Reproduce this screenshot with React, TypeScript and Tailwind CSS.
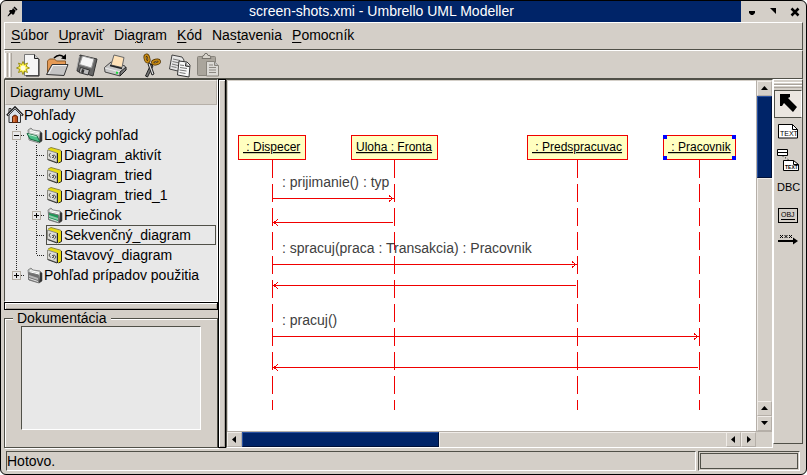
import type { ReactNode } from "react";

const participants = [
  { label: " : Dispecer", x: 238, width: 67, line: 272, selected: false },
  { label: "Uloha : Fronta", x: 351, width: 86, line: 394, selected: false },
  { label: " : Predspracuvac", x: 527, width: 100, line: 577, selected: false },
  { label: " : Pracovnik", x: 663, width: 72, line: 699, selected: true },
];

const messages = [
  { label: ": prijimanie() : typ", to: 394, y: 198, reply: 222 },
  { label: ": spracuj(praca : Transakcia) : Pracovnik", to: 577, y: 264, reply: 285 },
  { label: ": pracuj()", to: 699, y: 336, reply: 367 },
];

function SequenceDiagram() {
  return (
    <svg viewBox="228 81 528 350" className="block h-[350px] w-[528px] max-w-none" fontFamily="'Liberation Sans', Arial, sans-serif">
      <g shapeRendering="crispEdges" stroke="#f00000" fill="none">
        {participants.map((p) => (
          <g key={p.label}>
            <path d={`M${p.line + 0.5} 160V410`} strokeDasharray="18 6" />
            <rect x={p.x + 0.5} y="135.5" width={p.width} height="24" fill="#ffffc0" />
          </g>
        ))}
        {messages.map((m) => (
          <g key={m.label}>
            <path d={`M272 ${m.y + 0.5}H${m.to - 1}M${m.to - 5} ${m.y - 2.5}l4 3l-4 3`} />
            <path d={`M273 ${m.reply + 0.5}H${m.to - 1}M278 ${m.reply - 2.5}l-4 3l4 3`} />
          </g>
        ))}
      </g>
      {participants.map((p) => (
        <text key={p.label} x={p.x + 5} y="151" className="whitespace-pre text-[12px] underline" fill="#000">
          {p.label}
        </text>
      ))}
      {messages.map((m) => (
        <text key={m.label} x="282" y={m.y - 11} className="text-[14px]" fill="#404040">
          {m.label}
        </text>
      ))}
      {participants
        .filter((p) => p.selected)
        .map((p) => (
          <path
            key={p.label}
            fill="#00f"
            shapeRendering="crispEdges"
            d={`M${p.x} 135h4v4h-4zM${p.x + p.width - 3} 135h4v4h-4zM${p.x} 156h4v4h-4zM${p.x + p.width - 3} 156h4v4h-4z`}
          />
        ))}
    </svg>
  );
}

function HomeIcon() {
  return (
    <svg viewBox="0 0 18 18" className="h-[18px] w-[18px] shrink-0">
      <path d="M3 8.500V16.500H14.500V8.500L9 3z" fill="#d9e0e8" stroke="#333" />
      <path d="M3 2.500h2v4l-2 2z" fill="#eee" stroke="#333" />
      <path d="M1 9.500L9 1.500l8 8" fill="none" stroke="#222" strokeWidth="2.400" />
      <path d="M2 9L9 2.200l7 6.800" fill="none" stroke="#c8ccd0" strokeWidth="0.900" />
      <path d="M6.500 16.500V10.500q2.500-3 5 0v6z" fill="#b84a18" stroke="#5a2208" />
      <path d="M8 11v5" stroke="#f0a060" />
    </svg>
  );
}

function FolderIcon({ tone, open }: { tone: string; open?: boolean }) {
  return (
    <svg viewBox="0 0 18 18" className="h-[18px] w-[18px] shrink-0">
      <path d="M2 4l3-2 2 2 7 1 2 2v8l-3 2L3 14z" fill="#c4c8c4" stroke="#8a8a8a" />
      <path d="M14 6l2 1v8l-3 2z" fill="#333" />
      <path d="M4 4.500l9 2M4 6l9 2" stroke="#fff" />
      {open ? (
        <>
          <path d="M1 7.500l10 2.500 3 6L4 13z" fill={tone} stroke="#17683f" />
          <path d="M2.500 8.500l8 2" stroke="#c8f0d8" />
        </>
      ) : (
        <>
          <path d="M2.500 6.500l10 2.500v7.500l-10-3z" fill={tone} stroke="#777" />
          <path d="M3 9l9 3v2L3 11z" fill="#fff" opacity="0.500" />
          <path d="M3 12.500l9 3" stroke="#e8e8e8" />
        </>
      )}
    </svg>
  );
}

function DiagramIcon() {
  return (
    <svg viewBox="0 0 18 18" className="h-[18px] w-[18px] shrink-0">
      <path d="M2 3.500l3-2 9 3 1.500 1v10l-3 1.500z" fill="#e8dc10" />
      <path d="M2 3l3-1.500 9 2.500 1.500 1" fill="none" stroke="#777020" strokeWidth="0.800" />
      <path d="M1.500 4l9.500 3v9.500L1.500 13z" fill="#dcdcd8" stroke="#8c8c84" />
      <path d="M11.500 7v10M15.500 5v10.500l-3 1.500" fill="none" stroke="#222" />
      <path d="M1.500 13.500L11 17" stroke="#333" />
      <path d="M4.500 7L3 9l1.500 2.500M8 8.500l2 2.500-2 2.500M6 9.500h1.500v2H6" fill="none" stroke="#444" strokeWidth="0.900" />
    </svg>
  );
}

type GuideKind = "line" | "tee" | "end" | "minus" | "plus" | "plusEnd";

function Guide({ kind }: { kind: GuideKind }) {
  const boxed = kind === "minus" || kind === "plus" || kind === "plusEnd";
  const last = kind === "end" || kind === "plusEnd";
  const drawing = (
    <svg viewBox="0 0 20 20" className="block h-5 w-5" shapeRendering="crispEdges" fill="none">
      <path d={last ? "M10.500 0V10" : "M10.500 0V20"} stroke="#222" strokeDasharray="1 1" />
      {kind !== "line" && <path d="M11 10.500H18" stroke="#222" strokeDasharray="1 1" />}
      {boxed && (
        <>
          <rect x="6.500" y="6.500" width="8" height="8" fill="#e8e8e8" stroke="#b5aea4" />
          <path d={kind === "minus" ? "M8 10.500h5" : "M8 10.500h5M10.500 8v5"} stroke="#000" />
        </>
      )}
    </svg>
  );
  return boxed ? (
    <button type="button" aria-label={kind === "minus" ? "Zbaliť" : "Rozbaliť"} className="shrink-0">
      {drawing}
    </button>
  ) : (
    <span className="shrink-0">{drawing}</span>
  );
}

const tree: { label: string; guides: GuideKind[]; icon: ReactNode; selected?: boolean }[] = [
  { label: "Pohľady", guides: [], icon: <HomeIcon /> },
  { label: "Logický pohľad", guides: ["minus"], icon: <FolderIcon tone="#4cc088" open /> },
  { label: "Diagram_aktivít", guides: ["line", "tee"], icon: <DiagramIcon /> },
  { label: "Diagram_tried", guides: ["line", "tee"], icon: <DiagramIcon /> },
  { label: "Diagram_tried_1", guides: ["line", "tee"], icon: <DiagramIcon /> },
  { label: "Priečinok", guides: ["line", "plus"], icon: <FolderIcon tone="#209858" /> },
  { label: "Sekvenčný_diagram", guides: ["line", "tee"], icon: <DiagramIcon />, selected: true },
  { label: "Stavový_diagram", guides: ["line", "end"], icon: <DiagramIcon /> },
  { label: "Pohľad prípadov použitia", guides: ["plusEnd"], icon: <FolderIcon tone="#707070" /> },
];

const menus = [
  ["", "S", "úbor"],
  ["", "U", "praviť"],
  ["Dia", "g", "ram"],
  ["", "K", "ód"],
  ["Nas", "t", "avenia"],
  ["", "P", "omocník"],
];

const fileTools: { name: string; drawing: ReactNode }[] = [
  {
    name: "Nový",
    drawing: (
      <>
        <path d="M9.500 2.500h10l4 4v17h-14z" fill="#f6f6f6" stroke="#777" />
        <path d="M24 7v17H11" fill="none" stroke="#222" />
        <path d="M19.500 2.500v4h4" fill="#ccc" stroke="#222" />
        <path d="M8 9.500l1.300 3L12.500 11l-1.300 3.300 3.300 1.700-3.300 1.300 1.300 3.200-3.200-1.300L8 22.500l-1.300-3.300-3.200 1.300 1.300-3.200L1.500 16l3.300-1.700L3.500 11l3.200 1.500z" fill="#fff34a" stroke="#8b8000" strokeWidth="0.800" />
        <circle cx="8" cy="16" r="2.500" fill="#fffde0" />
      </>
    ),
  },
  {
    name: "Otvoriť",
    drawing: (
      <>
        <path d="M3.500 22.500V9l2-2h5l2 2h9v4" fill="#e59a55" stroke="#8a5a2a" />
        <path d="M2.500 22.500L8 12.500h16l-4 11z" fill="#c4c4c4" stroke="#333" />
        <path d="M4.500 22L9 13.500h14" fill="none" stroke="#f2f2f2" />
        <path d="M10 6q5-5 10-1" fill="none" stroke="#000" strokeWidth="1.600" />
        <path d="M17 6.500l5 1V2z" fill="#000" />
      </>
    ),
  },
  {
    name: "Uložiť",
    drawing: (
      <>
        <path d="M7 3l17 4-4 17-16-5z" fill="#666" stroke="#333" />
        <path d="M9.500 4l11.500 3-2.500 9-12-3.500z" fill="#f5f5f5" stroke="#999" />
        <path d="M7.500 15.500l9 2.500-1.500 5-9-2.500z" fill="#bbb" stroke="#333" />
        <path d="M9 17l2.500.700-1 3.500L8 20.500z" fill="#333" />
        <path d="M6.500 4L3.500 18" stroke="#aaa" />
      </>
    ),
  },
  {
    name: "Tlačiť",
    drawing: (
      <>
        <path d="M2.500 15.500L9 10l14 4 1 4-6 6L3 20z" fill="#c8c8c8" stroke="#444" />
        <path d="M3 16l15 4 6-5" fill="none" stroke="#eee" />
        <path d="M9 13l3-10 10 2.500-2 10z" fill="#ffe2b8" stroke="#666" />
        <path d="M8 13.500l12 3" stroke="#222" strokeWidth="1.500" />
        <path d="M18 20v4l6-6v-3z" fill="#777" stroke="#222" />
        <path d="M14 20.500l2 .500" stroke="#18d838" strokeWidth="2" />
      </>
    ),
  },
  {
    name: "Vystrihnúť",
    drawing: (
      <>
        <path d="M14 12l2 2-5.500 11-2-1z" fill="#777" stroke="#222" />
        <path d="M11 12l2-1 4 11-2 1z" fill="#ddd" stroke="#222" />
        <ellipse cx="10" cy="6.500" rx="1.800" ry="3.500" fill="none" stroke="#4d3000" strokeWidth="3" transform="rotate(-15 10 6.500)" />
        <ellipse cx="10" cy="6.500" rx="1.800" ry="3.500" fill="none" stroke="#c98c14" strokeWidth="1.600" transform="rotate(-15 10 6.500)" />
        <ellipse cx="19" cy="10" rx="3.500" ry="1.800" fill="none" stroke="#4d3000" strokeWidth="3" transform="rotate(-15 19 10)" />
        <ellipse cx="19" cy="10" rx="3.500" ry="1.800" fill="none" stroke="#c98c14" strokeWidth="1.600" transform="rotate(-15 19 10)" />
      </>
    ),
  },
  {
    name: "Kopírovať",
    drawing: (
      <>
        <path d="M6 3l10 2 2 3-2 12L3.500 17z" fill="#e6e6e6" stroke="#444" />
        <path d="M7 7l7 1.500M6.500 9.500l7 1.500M6 12l6 1.500M5.500 14.500l5 1" stroke="#777" />
        <path d="M13 9l8 1 3 3-1 12-11.500-2z" fill="#f8f8f8" stroke="#333" />
        <path d="M20 10.500l-.500 3.500 4 .500" fill="#bbb" stroke="#222" />
        <path d="M14 13l4 .500M14 15.500l7 1M13.500 18l7 1M13.500 20.500l6 1" stroke="#777" />
      </>
    ),
  },
  {
    name: "Prilepiť",
    drawing: (
      <>
        <rect x="2.500" y="4.500" width="18" height="19" rx="1" fill="#aaa59c" stroke="#88847c" />
        <path d="M7 6.500h9l-1-3h-2l-1-2h-2l-1 2H8z" fill="#d8d4cc" stroke="#77736c" />
        <path d="M11.500 9.500h8l4 4v10.500h-12z" fill="#dcdad6" stroke="#88847c" />
        <path d="M14 13h4M14 15.500h7M14 18h7M14 20.500h7" stroke="#8c8882" />
        <path d="M19.500 9.500v4h4" fill="#bbb" stroke="#88847c" />
      </>
    ),
  },
];

const umlTools: { name: string; drawing: ReactNode }[] = [
  {
    name: "Výber",
    drawing: <path d="M5 3h10v3l-2 1 9 9-4 5-9-9-2 3H5z" fill="#000" />,
  },
  {
    name: "Poznámka",
    drawing: (
      <>
        <path d="M3.500 5.500h14l5 5v8.500h-19z" fill="#fff" stroke="#000" />
        <path d="M17.500 5.500v5h5" fill="none" stroke="#000" />
        <text x="5" y="17" className="text-[7px]" fill="#000">TEXT</text>
      </>
    ),
  },
  {
    name: "Kotva poznámky",
    drawing: (
      <>
        <path d="M2.500 2.500h10v6h-10zM2.500 5.500h10" fill="#fff" stroke="#000" />
        <path d="M7.500 9l8 5" stroke="#000" strokeDasharray="1 2" />
        <path d="M8.500 13.500h10l5 4v6h-15z" fill="#fff" stroke="#000" />
        <path d="M18.500 13.500v4h5" fill="none" stroke="#000" />
        <text x="10" y="22" className="text-[5px] font-bold" fill="#000">TEXT</text>
      </>
    ),
  },
  {
    name: "Text",
    drawing: <text x="2" y="16" className="text-[11px]" fill="#000">DBC</text>,
  },
  {
    name: "Objekt",
    drawing: (
      <>
        <rect x="3.500" y="5.500" width="19" height="14" fill="none" stroke="#000" />
        <text x="6" y="14" className="text-[7px]" fill="#000">OBJ</text>
        <path d="M6 16.500h14" stroke="#000" />
      </>
    ),
  },
  {
    name: "Správa",
    drawing: (
      <>
        <path d="M5 4l3 3m0-3l-3 3M9.500 4l3 3m0-3l-3 3M14 4l3 3m0-3l-3 3" stroke="#000" />
        <path d="M3 10h17" stroke="#000" strokeWidth="2" />
        <path d="M18 6.500l5 3.500-5 3.500z" fill="#000" />
      </>
    ),
  },
];

const arrows = {
  up: "M4 9h7L7.500 5z",
  down: "M4 5h7L7.500 9z",
  left: "M9 4v7L5 7.500z",
  right: "M6 4v7l4-3.500z",
};

function ScrollButton({ direction, label }: { direction: keyof typeof arrows; label: string }) {
  return (
    <button
      type="button"
      aria-label={label}
      className="flex h-[15px] w-[15px] shrink-0 items-center justify-center border border-t-[#f0ece8] border-r-[#b5afa8] border-b-[#b5afa8] border-l-[#f0ece8] bg-[#d4cfc8]"
    >
      <svg viewBox="0 0 15 15" className="h-[15px] w-[15px] shrink-0">
        <path d={arrows[direction]} fill="#000" />
      </svg>
    </button>
  );
}

export default function App() {
  return (
    <div className="flex min-h-screen flex-col overflow-hidden rounded-md border border-black bg-[#d4cfc8] font-['Liberation_Sans',Arial,sans-serif] text-[14px] leading-5 text-black">
      <header className="flex h-[21px] items-stretch">
        <button type="button" aria-label="Pripnúť" className="flex w-[21px] items-center justify-center">
          <svg viewBox="0 0 12 12" className="h-3 w-3">
            <path d="M7 2l3 3-1 .500-.500 2L7 9 5.500 7.500 2 10.500l-.500-.500L4 6.500 3 5l1-1h2z" fill="#000" />
            <path d="M8 1l3 3" stroke="#000" strokeWidth="1.500" />
          </svg>
        </button>
        <h1 className="flex-1 bg-[#002468] text-center text-white">screen-shots.xmi - Umbrello UML Modeller</h1>
        <div className="flex w-[65px] justify-around">
          <button type="button" aria-label="Minimalizovať">
            <svg viewBox="0 0 10 10" className="h-2.5 w-2.5">
              <path d="M2 4h6v2L6 8H4L2 6z" fill="#000" />
            </svg>
          </button>
          <button type="button" aria-label="Maximalizovať">
            <svg viewBox="0 0 10 10" className="h-2.5 w-2.5">
              <path d="M2 1h6v6z" fill="#000" />
            </svg>
          </button>
          <button type="button" aria-label="Zavrieť">
            <svg viewBox="0 0 10 10" className="h-2.5 w-2.5">
              <path d="M1.500 1.500l7 7m0-7l-7 7" stroke="#000" strokeWidth="2.500" />
            </svg>
          </button>
        </div>
      </header>

      <div className="mr-[3px] ml-[3px] flex flex-1 flex-col">
        <nav className="flex h-7 items-center gap-2.5 border border-t-white border-r-[#505048] border-b-[#505048] border-l-white px-1.5 pb-0.5">
          {menus.map(([before, key, after]) => (
            <button type="button" key={after}>
              {before}
              <span className="underline underline-offset-2">{key}</span>
              {after}
            </button>
          ))}
        </nav>

        <div role="toolbar" aria-label="Súbor" className="flex h-[29px] items-center border border-t-white border-r-[#505048] border-b-[#505048] border-l-white">
          <div className="mr-px flex h-6 w-[7px] justify-between">
            <span className="w-px bg-white" />
            <span className="w-px bg-[#aaa49c]" />
            <span className="w-px bg-white" />
            <span className="w-px bg-[#aaa49c]" />
          </div>
          {fileTools.map((tool, i) => (
            <button type="button" key={tool.name} aria-label={tool.name} className={i === 4 ? "ml-1.5 flex w-[29px] justify-center" : "flex w-[29px] justify-center"}>
              <svg viewBox="0 0 26 26" className="h-[26px] w-[26px]">{tool.drawing}</svg>
            </button>
          ))}
        </div>

        <main className="flex flex-1">
          <aside className="flex w-[214px] shrink-0 flex-col">
            <section className="flex flex-1 flex-col border border-t-[#505048] border-r-white border-b-white border-l-[#505048] bg-[#e8e8e8]">
              <h2 className="h-[25px] border border-t-[#ece8e4] border-r-[#b5afa8] border-b-[#b5afa8] border-l-[#ece8e4] bg-[#d4cfc8] px-1 leading-[22px]">
                Diagramy UML
              </h2>
              <ul className="px-px">
                {tree.map((node) => (
                  <li key={node.label} className="flex h-5">
                    {node.guides.map((kind, i) => (
                      <Guide key={i} kind={kind} />
                    ))}
                    <button
                      type="button"
                      className={
                        node.selected
                          ? "flex flex-1 items-center text-left whitespace-nowrap outline -outline-offset-1 outline-[#505048]"
                          : "flex flex-1 items-center text-left whitespace-nowrap"
                      }
                    >
                      {node.icon}
                      {node.label}
                    </button>
                  </li>
                ))}
              </ul>
            </section>
            <div role="separator" className="h-2 border border-black bg-[#d4cfc8] shadow-[inset_1px_1px_0_white,inset_-1px_-1px_0_#aaa49c]" />
            <fieldset className="h-[138px] min-w-0 border border-[#505048] px-4 shadow-[inset_1px_1px_0_white,1px_1px_0_white]">
              <legend className="-ml-2 bg-[#d4cfc8] px-1 leading-4">
                <label htmlFor="documentation">Dokumentácia</label>
              </legend>
              <textarea
                id="documentation"
                className="block h-[104px] w-full resize-none border border-t-[#505048] border-r-white border-b-white border-l-[#505048] bg-[#e8e8e8] px-1 outline-none"
              />
            </fieldset>
          </aside>

          <div role="separator" className="w-2 shrink-0 border border-black bg-[#d4cfc8] shadow-[inset_1px_1px_0_white,inset_-1px_-1px_0_#aaa49c]" />

          <section className="flex min-w-0 flex-1 flex-col border border-t-[#505048] border-r-white border-b-white border-l-[#505048]">
            <div className="flex flex-1">
              <div className="min-w-0 flex-1 overflow-hidden border-t border-l border-[#d4cfc8] bg-white">
                <SequenceDiagram />
              </div>
              <div className="flex w-4 shrink-0 flex-col border-l border-[#b5afa8] pt-px">
                <ScrollButton direction="up" label="Posunúť nahor" />
                <div className="h-[82px] border border-t-[#2850a0] border-r-[#001038] border-b-[#001038] border-l-[#2850a0] bg-[#002468]" />
                <div className="flex-1 border-t border-l border-[#f0ece8]" />
                <ScrollButton direction="up" label="O stranu nahor" />
                <ScrollButton direction="down" label="Posunúť nadol" />
              </div>
            </div>
            <div className="flex h-4 border-t border-[#b5afa8] pr-4">
              <ScrollButton direction="left" label="Posunúť doľava" />
              <div className="w-[197px] border border-t-[#2850a0] border-r-[#001038] border-b-[#001038] border-l-[#2850a0] bg-[#002468]" />
              <div className="flex-1 border-t border-l border-[#f0ece8]" />
              <ScrollButton direction="left" label="O stranu doľava" />
              <ScrollButton direction="right" label="Posunúť doprava" />
            </div>
          </section>

          <div role="toolbar" aria-label="UML" className="mb-1 flex w-[30px] shrink-0 flex-col items-center border border-t-white border-r-[#505048] border-b-[#505048] border-l-white pt-0.5">
            <div className="flex h-2 w-7 flex-col justify-between pb-0.5">
              <span className="h-px bg-white" />
              <span className="h-px bg-[#aaa49c]" />
              <span className="h-px bg-white" />
              <span className="h-px bg-[#aaa49c]" />
            </div>
            {umlTools.map((tool, i) => (
              <button
                type="button"
                key={tool.name}
                aria-label={tool.name}
                className={
                  i === 0
                    ? "flex h-7 w-7 items-center justify-center border border-t-[#505048] border-r-white border-b-[#505048] border-l-[#505048] bg-[#ebe6e0]"
                    : "flex h-7 w-7 items-center justify-center"
                }
              >
                <svg viewBox="0 0 26 26" className="h-[26px] w-[26px] shrink-0">{tool.drawing}</svg>
              </button>
            ))}
          </div>
        </main>

        <footer className="flex h-[26px] gap-0.5 pt-[3px] pr-[3px] pb-[3px] pl-0.5">
          <p className="flex-1 border border-t-[#505048] border-r-white border-b-white border-l-[#505048] leading-[18px]">Hotovo.</p>
          <div className="flex w-[102px] border border-t-[#505048] border-r-white border-b-white border-l-[#505048] p-px">
            <div role="progressbar" aria-label="Priebeh" className="flex-1 border border-[#505048]" />
          </div>
        </footer>
      </div>
    </div>
  );
}
